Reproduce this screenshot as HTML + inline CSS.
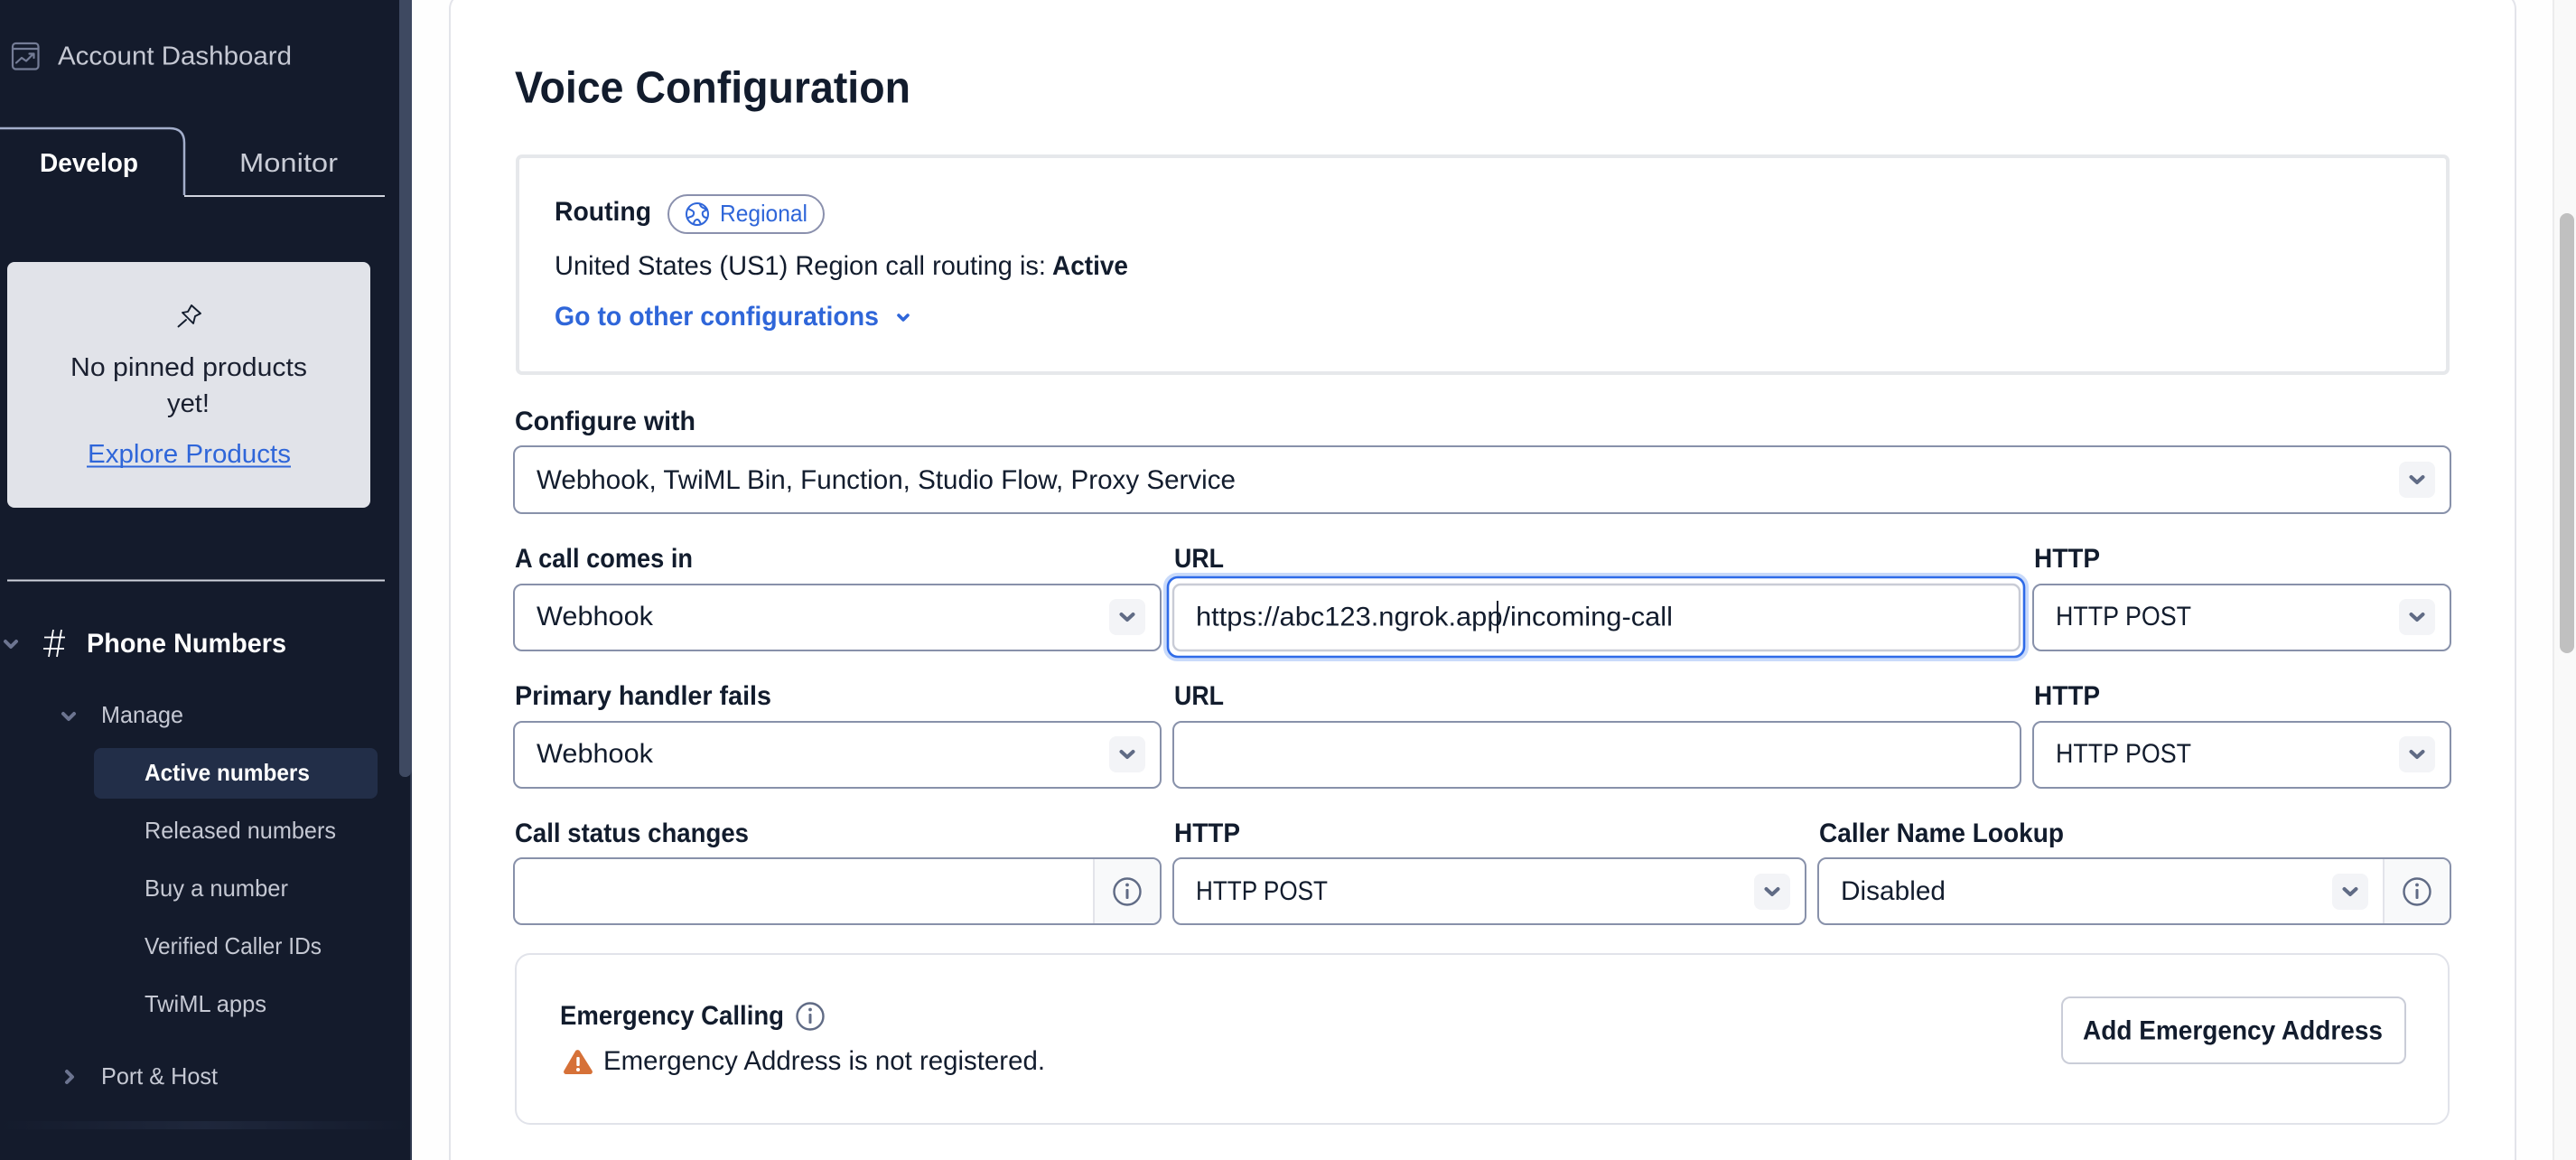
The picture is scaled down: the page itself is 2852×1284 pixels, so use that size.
<!DOCTYPE html>
<html lang="en">
<head>
<meta charset="utf-8">
<title>Voice Configuration</title>
<style>
html,body{margin:0;padding:0;width:2852px;height:1284px;overflow:hidden;background:#fff}
svg{display:block}
text{font-family:"Liberation Sans",sans-serif;white-space:pre}
.s{font-size:26px;fill:#c5c8d3}
.s2{font-size:29px;fill:#c9ccd6}
.sb{font-weight:700;fill:#fff}
.m{font-size:29.5px;fill:#121c2d}
.l{font-size:29.5px;font-weight:700;fill:#121c2d}
.f{fill:#fff;stroke:#8891aa;stroke-width:2}
.box{fill:#f3f4f7}
.ch{fill:none;stroke:#606b85;stroke-width:4;stroke-linecap:round;stroke-linejoin:round}
.i{fill:none;stroke:#606b85;stroke-width:2.4}
</style>
</head>
<body>
<svg width="2852" height="1284" viewBox="0 0 2852 1284" xmlns="http://www.w3.org/2000/svg">
<defs>
<linearGradient id="fade" x1="0" x2="1" y1="0" y2="0">
<stop offset="0" stop-color="#232c42" stop-opacity="0"/>
<stop offset=".5" stop-color="#232c42" stop-opacity=".7"/>
<stop offset="1" stop-color="#232c42" stop-opacity="0"/>
</linearGradient>
</defs>

<!-- page -->
<rect width="2852" height="1284" fill="#fefefe"/>

<!-- sidebar -->
<rect width="456" height="1284" fill="#141b2c"/>
<rect x="454" y="850" width="2" height="434" fill="#303a50"/>
<path d="M442 0H456V852a8 8 0 0 1-6 8H448a6 6 0 0 1-6-6Z" fill="#3e4961"/>

<!-- account dashboard -->
<g fill="none" stroke="#747c96" stroke-width="2.2" stroke-linecap="round" stroke-linejoin="round">
<rect x="14" y="48" width="28.5" height="28.5" rx="3.5"/>
<path d="M14 54H42.5"/>
<path d="M18 69.5L24 64L29 67.5L37 59.5M32.5 59.5H37.5V64"/>
</g>
<text x="64" y="71.5" class="s" style="font-size:29px" textLength="259" lengthAdjust="spacingAndGlyphs">Account Dashboard</text>

<!-- tabs -->
<path d="M0 142H188Q204 142 204 158V216" fill="none" stroke="#a3aecb" stroke-width="2.5"/>
<path d="M204 217H426" fill="none" stroke="#d0d3dd" stroke-width="2"/>
<text x="44" y="190" class="s2 sb" textLength="109" lengthAdjust="spacingAndGlyphs">Develop</text>
<text x="265" y="190" class="s2" textLength="109" lengthAdjust="spacingAndGlyphs">Monitor</text>

<!-- pinned -->
<rect x="8" y="290" width="402" height="272" rx="8" fill="#e1e3e9"/>
<path d="M197.5 361.5L206 354M212 338L222 347L216 350L214 358L202 346L208 345Z" fill="none" stroke="#121c2d" stroke-width="1.9" stroke-linejoin="round" stroke-linecap="round"/>
<text x="78" y="416" style="font-size:29px;fill:#1a2030" textLength="262" lengthAdjust="spacingAndGlyphs">No pinned products</text>
<text x="185" y="456" style="font-size:29px;fill:#1a2030" textLength="47" lengthAdjust="spacingAndGlyphs">yet!</text>
<text x="97" y="512" style="font-size:29px;fill:#2f66d9" textLength="225" lengthAdjust="spacingAndGlyphs">Explore Products</text>
<rect x="96" y="515.5" width="226" height="2" fill="#2f66d9"/>

<rect x="8" y="641.5" width="418" height="2" fill="#d0d3dd"/>

<!-- nav -->
<path d="M6 710L12 716L18 710" fill="none" stroke="#6c7490" stroke-width="4" stroke-linecap="round" stroke-linejoin="round"/>
<path d="M49 705.5H72M48 718H71M59 697L54 727M68 697L63 727" fill="none" stroke="#fff" stroke-width="1.8"/>
<text x="96" y="722" style="font-size:30px" class="sb" textLength="221" lengthAdjust="spacingAndGlyphs">Phone Numbers</text>

<path d="M70 790L76 796L82 790" fill="none" stroke="#6c7490" stroke-width="4" stroke-linecap="round" stroke-linejoin="round"/>
<text x="112" y="800" class="s" textLength="91" lengthAdjust="spacingAndGlyphs">Manage</text>

<rect x="104" y="828" width="314" height="56" rx="8" fill="#222e48"/>
<text x="160" y="864" class="s sb" textLength="183" lengthAdjust="spacingAndGlyphs">Active numbers</text>
<text x="160" y="928" class="s" textLength="212" lengthAdjust="spacingAndGlyphs">Released numbers</text>
<text x="160" y="992" class="s" textLength="159" lengthAdjust="spacingAndGlyphs">Buy a number</text>
<text x="160" y="1056" class="s" textLength="196" lengthAdjust="spacingAndGlyphs">Verified Caller IDs</text>
<text x="160" y="1120" class="s" textLength="135" lengthAdjust="spacingAndGlyphs">TwiML apps</text>
<path d="M74 1186L80 1192L74 1198" fill="none" stroke="#6c7490" stroke-width="4" stroke-linecap="round" stroke-linejoin="round"/>
<text x="112" y="1200" class="s" textLength="129" lengthAdjust="spacingAndGlyphs">Port &amp; Host</text>
<rect x="0" y="1241" width="454" height="9" fill="url(#fade)"/>

<!-- page scrollbar -->
<rect x="2826" y="0" width="26" height="1284" fill="#f9f9f9"/>
<rect x="2826" y="0" width="2" height="1284" fill="#ececed"/>
<rect x="2834" y="236" width="16" height="487" rx="8" fill="#c0c0c0"/>

<!-- card -->
<rect x="498" y="-8" width="2287" height="1320" rx="18" fill="#fff" stroke="#e3e4ea" stroke-width="2"/>

<text x="570" y="113.5" style="font-size:49px;font-weight:700;fill:#121c2d" textLength="438" lengthAdjust="spacingAndGlyphs">Voice Configuration</text>

<!-- routing -->
<rect x="573" y="173" width="2137" height="240" rx="5" fill="#fff" stroke="#e6e8eb" stroke-width="4"/>
<text x="614" y="244" class="l" textLength="107" lengthAdjust="spacingAndGlyphs">Routing</text>
<rect x="740" y="216" width="172" height="42" rx="21" fill="#fff" stroke="#8a90ad" stroke-width="2"/>
<g fill="none" stroke="#2f66d9" stroke-width="2" stroke-linejoin="round">
<circle cx="772" cy="237" r="12"/>
<path d="M762 231C765 233 769 233 768 237C767 241 763 239 761 242M775 225.500C775 229 778 230 783 232C779 234 777 234 778 238C779 241 782 241 783 241M768 248.500C768 245 770 243 772 243C774 243 775 246 776 248.500"/>
</g>
<text x="797" y="245" style="font-size:26px;fill:#2f66d9" textLength="97" lengthAdjust="spacingAndGlyphs">Regional</text>
<text x="614" y="304" class="m" textLength="544" lengthAdjust="spacingAndGlyphs">United States (US1) Region call routing is:</text>
<text x="1165" y="304" class="l" textLength="84" lengthAdjust="spacingAndGlyphs">Active</text>
<text x="614" y="360" class="l" style="fill:#2f66d9" textLength="359" lengthAdjust="spacingAndGlyphs">Go to other configurations</text>
<path d="M995 349L1000 354L1005 349" fill="none" stroke="#2f66d9" stroke-width="3.6" stroke-linecap="round" stroke-linejoin="round"/>

<!-- configure with -->
<text x="570" y="476" class="l" textLength="200" lengthAdjust="spacingAndGlyphs">Configure with</text>
<rect x="569" y="494" width="2144" height="74" rx="9" class="f"/>
<text x="594" y="541" class="m" textLength="774" lengthAdjust="spacingAndGlyphs">Webhook, TwiML Bin, Function, Studio Flow, Proxy Service</text>
<rect x="2656" y="511" width="40" height="40" rx="8" class="box"/>
<path d="M2669.500 528L2676 534L2682.500 528" class="ch"/>

<!-- row A -->
<text x="570" y="628" class="l" textLength="197" lengthAdjust="spacingAndGlyphs">A call comes in</text>
<text x="1300" y="628" class="l" textLength="55" lengthAdjust="spacingAndGlyphs">URL</text>
<text x="2252" y="628" class="l" textLength="73" lengthAdjust="spacingAndGlyphs">HTTP</text>
<rect x="569" y="647" width="716" height="73" rx="9" class="f"/>
<text x="594" y="692" class="m" textLength="129" lengthAdjust="spacingAndGlyphs">Webhook</text>
<rect x="1228" y="663" width="40" height="40" rx="8" class="box"/>
<path d="M1241.500 680L1248 686L1254.500 680" class="ch"/>

<rect x="1290.500" y="636.500" width="953" height="93" rx="13" fill="none" stroke="#c9dafa" stroke-width="5"/>
<rect x="1293" y="639" width="948" height="88" rx="11" fill="#fff" stroke="#2f6be8" stroke-width="2.6"/>
<rect x="1299" y="647" width="937" height="73" rx="8" fill="#fff" stroke="#c9ccd6" stroke-width="2.400"/>
<text x="1324" y="692.500" class="m" textLength="528" lengthAdjust="spacingAndGlyphs">https://abc123.ngrok.app/incoming-call</text>
<rect x="1657" y="665" width="2" height="36" fill="#121c2d"/>

<rect x="2251" y="647" width="462" height="73" rx="9" class="f"/>
<text x="2276" y="692" class="m" textLength="150" lengthAdjust="spacingAndGlyphs">HTTP POST</text>
<rect x="2656" y="663" width="40" height="40" rx="8" class="box"/>
<path d="M2669.500 680L2676 686L2682.500 680" class="ch"/>

<!-- row B -->
<text x="570" y="780" class="l" textLength="284" lengthAdjust="spacingAndGlyphs">Primary handler fails</text>
<text x="1300" y="780" class="l" textLength="55" lengthAdjust="spacingAndGlyphs">URL</text>
<text x="2252" y="780" class="l" textLength="73" lengthAdjust="spacingAndGlyphs">HTTP</text>
<rect x="569" y="799" width="716" height="73" rx="9" class="f"/>
<text x="594" y="844" class="m" textLength="129" lengthAdjust="spacingAndGlyphs">Webhook</text>
<rect x="1228" y="815" width="40" height="40" rx="8" class="box"/>
<path d="M1241.500 832L1248 838L1254.500 832" class="ch"/>
<rect x="1299" y="799" width="938" height="73" rx="9" class="f"/>
<rect x="2251" y="799" width="462" height="73" rx="9" class="f"/>
<text x="2276" y="844" class="m" textLength="150" lengthAdjust="spacingAndGlyphs">HTTP POST</text>
<rect x="2656" y="815" width="40" height="40" rx="8" class="box"/>
<path d="M2669.500 832L2676 838L2682.500 832" class="ch"/>

<!-- row C -->
<text x="570" y="932" class="l" textLength="259" lengthAdjust="spacingAndGlyphs">Call status changes</text>
<text x="1300" y="932" class="l" textLength="73" lengthAdjust="spacingAndGlyphs">HTTP</text>
<text x="2014" y="932" class="l" textLength="271" lengthAdjust="spacingAndGlyphs">Caller Name Lookup</text>

<rect x="569" y="950" width="716" height="73" rx="9" class="f"/>
<path d="M1211 951H1275a9 9 0 0 1 9 9V1013a9 9 0 0 1-9 9H1211Z" fill="#f8f9fa"/>
<rect x="1210" y="951" width="2" height="71" fill="#e3e4ea"/>
<circle cx="1248" cy="987" r="14.500" class="i"/>
<rect x="1246.500" y="984" width="3" height="11" rx="1" fill="#606b85"/>
<circle cx="1248" cy="979.500" r="1.900" fill="#606b85"/>

<rect x="1299" y="950" width="700" height="73" rx="9" class="f"/>
<text x="1324" y="996" class="m" textLength="146" lengthAdjust="spacingAndGlyphs">HTTP POST</text>
<rect x="1942" y="967" width="40" height="40" rx="8" class="box"/>
<path d="M1955.500 984L1962 990L1968.500 984" class="ch"/>

<rect x="2013" y="950" width="700" height="73" rx="9" class="f"/>
<path d="M2639 951H2703a9 9 0 0 1 9 9V1013a9 9 0 0 1-9 9H2639Z" fill="#f8f9fa"/>
<rect x="2638" y="951" width="2" height="71" fill="#e3e4ea"/>
<text x="2038" y="996" class="m" textLength="116" lengthAdjust="spacingAndGlyphs">Disabled</text>
<rect x="2582" y="967" width="40" height="40" rx="8" class="box"/>
<path d="M2595.500 984L2602 990L2608.500 984" class="ch"/>
<circle cx="2676" cy="987" r="14.500" class="i"/>
<rect x="2674.500" y="984" width="3" height="11" rx="1" fill="#606b85"/>
<circle cx="2676" cy="979.500" r="1.900" fill="#606b85"/>

<!-- emergency -->
<rect x="571" y="1056" width="2140" height="188" rx="16" fill="#fff" stroke="#e1e3ea" stroke-width="2"/>
<text x="620" y="1134" class="l" textLength="248" lengthAdjust="spacingAndGlyphs">Emergency Calling</text>
<circle cx="897" cy="1125" r="14.500" class="i"/>
<rect x="895.500" y="1122" width="3" height="11" rx="1" fill="#606b85"/>
<circle cx="897" cy="1117.500" r="1.900" fill="#606b85"/>
<path d="M637 1163.500a3 3 0 0 1 5 0L655.500 1185a2.600 2.600 0 0 1-2.300 4H626.800a2.600 2.600 0 0 1-2.300-4Z" fill="#d67138"/>
<rect x="638.300" y="1170" width="3.400" height="10" rx="1" fill="#fff"/>
<circle cx="640" cy="1184" r="2" fill="#fff"/>
<text x="668" y="1184" class="m" textLength="489" lengthAdjust="spacingAndGlyphs">Emergency Address is not registered.</text>
<rect x="2283" y="1104" width="380" height="73" rx="9" fill="#fff" stroke="#cacdd8" stroke-width="2"/>
<text x="2306" y="1150.500" class="l" textLength="332" lengthAdjust="spacingAndGlyphs">Add Emergency Address</text>
</svg>
</body>
</html>
